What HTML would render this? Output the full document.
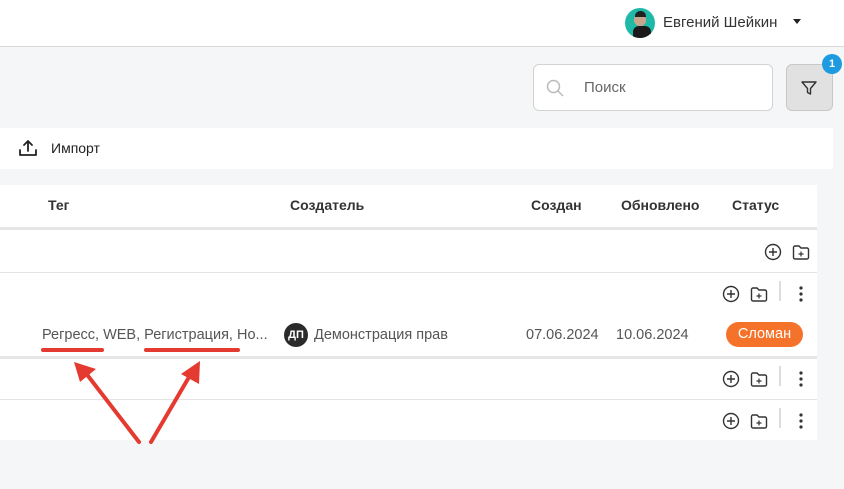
<!DOCTYPE html>
<html><head><meta charset="utf-8"><style>
*{margin:0;padding:0;box-sizing:border-box}
body{width:844px;height:489px;background:#f5f6f8;font-family:"Liberation Sans",sans-serif;position:relative;overflow:hidden;color:#2b2b2b}
.a{position:absolute}
.t{font-size:14px;white-space:nowrap}
.hdr{font-size:14px;font-weight:bold;color:#333;white-space:nowrap}
.line{position:absolute;left:0;width:817px;height:1px;background:#e3e3e3}
.g{color:#555}
</style></head><body>
<div class="a" style="left:0;top:0;width:844px;height:47px;background:#fff;border-bottom:1px solid #d9d9d9"></div>
<div class="a" style="left:625px;top:8px;width:30px;height:30px;border-radius:50%;background:radial-gradient(circle at 50% 40%,#c9a58c 0 25%,#1fb9a8 27%);overflow:hidden"><div class="a" style="left:8px;top:18px;width:18px;height:14px;background:#1a1a1a;border-radius:6px 6px 0 0"></div><div class="a" style="left:10px;top:3px;width:11px;height:6px;background:#222;border-radius:5px 5px 0 0"></div></div>
<div class="a t" style="left:663px;top:14px;font-size:15px;color:#333">Евгений Шейкин</div>
<div class="a" style="left:793px;top:19px;border-left:4px solid transparent;border-right:4px solid transparent;border-top:5px solid #222"></div>

<div class="a" style="left:533px;top:64px;width:240px;height:47px;background:#fff;border:1px solid #d3d3d3;border-radius:6px"></div>
<svg class="a" style="left:546px;top:79px" width="18" height="18" viewBox="0 0 18 18"><circle cx="7.5" cy="7.5" r="6" fill="none" stroke="#bbb" stroke-width="1.5"/><path d="M12 12l5 5" stroke="#bbb" stroke-width="1.5"/></svg>
<div class="a t" style="left:584px;top:79px;color:#666;font-size:15px">Поиск</div>
<div class="a" style="left:786px;top:64px;width:47px;height:47px;background:#e1e1e1;border:1px solid #c8c8c8;border-radius:6px"></div>
<svg class="a" style="left:800px;top:79px" width="18" height="18" viewBox="0 0 18 18"><path d="M2 3h14l-5.5 6.5V15l-3-1.5V9.5z" fill="none" stroke="#333" stroke-width="1.4" stroke-linejoin="round"/></svg>
<div class="a" style="left:822px;top:54px;width:20px;height:20px;border-radius:50%;background:#1e9be0;color:#fff;font-size:11px;font-weight:bold;text-align:center;line-height:20px">1</div>

<div class="a" style="left:0;top:128px;width:833px;height:41px;background:#fff"></div>
<svg class="a" style="left:18px;top:138px" width="20" height="20" viewBox="0 0 20 20"><path d="M10 13V3M6 7l4-4 4 4M2 12v5h16v-5" fill="none" stroke="#222" stroke-width="1.8" stroke-linecap="round" stroke-linejoin="round"/></svg>
<div class="a t" style="left:51px;top:140px;color:#222">Импорт</div>

<div class="a" style="left:0;top:185px;width:817px;height:255px;background:#fff"></div>
<div class="a hdr" style="left:48px;top:197px">Тег</div>
<div class="a hdr" style="left:290px;top:197px">Создатель</div>
<div class="a hdr" style="left:531px;top:197px">Создан</div>
<div class="a hdr" style="left:621px;top:197px">Обновлено</div>
<div class="a hdr" style="left:732px;top:197px">Статус</div>
<div class="line" style="top:227px;height:3px;background:#e6e6e6"></div>
<div class="line" style="top:272px"></div>
<div class="line" style="top:356px;height:3px;background:#e6e6e6"></div>
<div class="line" style="top:399px"></div>

<svg width="0" height="0" style="position:absolute"><defs>
<g id="pl"><circle cx="9" cy="9" r="7.5" fill="none" stroke="#333" stroke-width="1.4"/><path d="M9 5v8M5 9h8" stroke="#333" stroke-width="1.4"/></g>
<g id="fo"><path d="M1.5 4.5a1.5 1.5 0 0 1 1.5-1.5h4l2 2h6a1.5 1.5 0 0 1 1.5 1.5v8a1.5 1.5 0 0 1-1.5 1.5H3a1.5 1.5 0 0 1-1.5-1.5z" fill="none" stroke="#333" stroke-width="1.4"/><path d="M9 8.5v5M6.5 11h5" stroke="#333" stroke-width="1.2"/></g>
<g id="dt"><circle cx="3" cy="3" r="1.6" fill="#333"/><circle cx="3" cy="9" r="1.6" fill="#333"/><circle cx="3" cy="15" r="1.6" fill="#333"/></g>
</defs></svg>

<svg class="a" style="left:764px;top:243px" width="18" height="18"><use href="#pl"/></svg>
<svg class="a" style="left:792px;top:243px" width="18" height="18"><use href="#fo"/></svg>

<svg class="a" style="left:722px;top:285px" width="18" height="18"><use href="#pl"/></svg>
<svg class="a" style="left:750px;top:285px" width="18" height="18"><use href="#fo"/></svg>
<div class="a" style="left:779px;top:281px;width:2px;height:20px;background:#ddd"></div>
<svg class="a" style="left:798px;top:285px" width="6" height="18"><use href="#dt"/></svg>

<svg class="a" style="left:722px;top:370px" width="18" height="18"><use href="#pl"/></svg>
<svg class="a" style="left:750px;top:370px" width="18" height="18"><use href="#fo"/></svg>
<div class="a" style="left:779px;top:366px;width:2px;height:20px;background:#ddd"></div>
<svg class="a" style="left:798px;top:370px" width="6" height="18"><use href="#dt"/></svg>

<svg class="a" style="left:722px;top:412px" width="18" height="18"><use href="#pl"/></svg>
<svg class="a" style="left:750px;top:412px" width="18" height="18"><use href="#fo"/></svg>
<div class="a" style="left:779px;top:408px;width:2px;height:20px;background:#ddd"></div>
<svg class="a" style="left:798px;top:412px" width="6" height="18"><use href="#dt"/></svg>

<div class="a t g" style="left:42px;top:327px;font-size:14.5px">Регресс, WEB, Регистрация, Но...</div>
<div class="a" style="left:284px;top:323px;width:24px;height:24px;border-radius:50%;background:#2b2b2b;color:#fff;font-size:11px;font-weight:bold;text-align:center;line-height:24px">ДП</div>
<div class="a t g" style="left:314px;top:327px;font-size:14.5px">Демонстрация прав</div>
<div class="a t g" style="left:526px;top:327px;font-size:14.5px">07.06.2024</div>
<div class="a t g" style="left:616px;top:327px;font-size:14.5px">10.06.2024</div>
<div class="a" style="left:726px;top:322px;width:77px;height:25px;border-radius:13px;background:#f5722a;color:#fff;font-size:14.5px;text-align:center;line-height:25px">Сломан</div>

<svg class="a" style="left:0;top:0" width="844" height="489">
<g stroke="#e53a30" stroke-width="4" stroke-linecap="round"><path d="M43 350H102M146 350H238"/></g>
<g fill="#e53a30" stroke="#e53a30" stroke-width="4" stroke-linecap="round">
<path d="M139 442L85 372"/><path d="M151 442L192 372"/>
</g>
<path d="M74 362L96 369L80 382Z" fill="#e53a30"/>
<path d="M200 361L199 384L181 374Z" fill="#e53a30"/>
</svg>
</body></html>
